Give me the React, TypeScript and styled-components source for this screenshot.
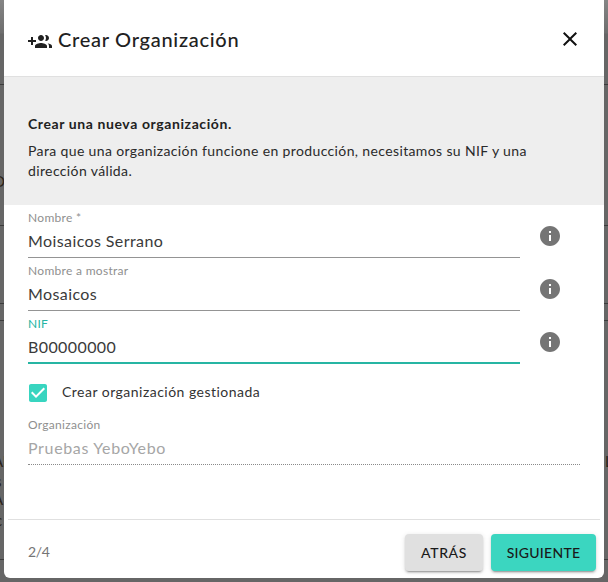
import React from "react";
import styled, { createGlobalStyle } from "styled-components";

const Global = createGlobalStyle`
  html, body { margin: 0; padding: 0; height: 100%; }
  body { font-family: "Lato", "Noto Sans", sans-serif; background: #666; overflow: hidden; }
  * { box-sizing: border-box; }
`;

const Screen = styled.div`
  width: 608px;
  height: 582px;
  padding: 0 4px 4px;
  background: linear-gradient(#858585 0, #6e6e6e 33px, #666 34px);
  position: relative;
  overflow: hidden;
`;

const BackLine = styled.div<{ $top: number }>`
  position: absolute;
  top: ${(p) => p.$top}px;
  left: 0;
  right: 0;
  height: 1px;
  background: #3c3c3c;
`;

const BackGlyph = styled.span<{ $top: number; $x: number }>`
  position: absolute;
  top: ${(p) => p.$top}px;
  left: ${(p) => p.$x}px;
  font-size: 15px;
  line-height: 16px;
  color: #2b2218;
`;

const Dialog = styled.div`
  position: relative;
  width: 600px;
  height: 578px;
  background: #fff;
  border-radius: 0 0 6px 6px;
  display: flex;
  flex-direction: column;
  color: #212121;
`;

const Header = styled.header`
  height: 77px;
  border-bottom: 1px solid #e0e0e0;
  padding: 0 22px 0 24px;
  display: flex;
  align-items: center;
  justify-content: space-between;
`;

const TitleGroup = styled.div`
  display: flex;
  align-items: center;
  gap: 6px;
  padding-top: 4px;
`;

const TitleIcon = styled.span`
  display: block;
  padding-top: 4px;
`;

const Title = styled.h2`
  margin: -2px 0 0;
  font-size: 20px;
  line-height: 24px;
  font-weight: 500;
  letter-spacing: 0.72px;
  color: #212121;
`;

const CloseButton = styled.button`
  border: 0;
  background: none;
  padding: 0;
  width: 24px;
  height: 24px;
  display: flex;
  color: #111;
  margin-top: 2px;
`;

const Notice = styled.section`
  height: 128px;
  background: #eee;
  padding: 37px 24px 0;
`;

const NoticeTitle = styled.p`
  margin: 0 0 7px;
  font-size: 14px;
  line-height: 20px;
  font-weight: 700;
  letter-spacing: 0.6px;
`;

const NoticeText = styled.p`
  margin: 0;
  font-size: 14px;
  line-height: 20px;
  letter-spacing: 0.37px;
  color: #2a2a2a;
`;

const Form = styled.div`
  flex: 1;
  padding: 6px 24px 0;
  display: flex;
  flex-direction: column;
`;

const FieldRow = styled.div`
  display: flex;
  height: 53px;
`;

const Field = styled.div<{ $focused?: boolean; $disabled?: boolean }>`
  width: ${(p) => (p.$disabled ? "552px" : "492px")};
  height: 47px;
  display: flex;
  flex-direction: column;
  border-bottom: ${(p) =>
    p.$disabled
      ? "1px dotted #8a8a8a"
      : p.$focused
        ? "2px solid #26b5a3"
        : "1px solid #949494"};
`;

const FieldLabel = styled.label<{ $focused?: boolean }>`
  font-size: 12px;
  line-height: 14px;
  letter-spacing: 0.3px;
  color: ${(p) => (p.$focused ? "#26b5a3" : "#8f8f8f")};
`;

const FieldValue = styled.div<{ $disabled?: boolean }>`
  margin-top: 6px;
  font-size: 16px;
  line-height: 20px;
  letter-spacing: ${(p) => (p.$disabled ? "0.65px" : "0.4px")};
  color: ${(p) => (p.$disabled ? "#a6a6a6" : "#3a3a3a")};
`;

const InfoSlot = styled.div`
  width: 60px;
  height: 47px;
  display: flex;
  align-items: center;
  justify-content: center;
  margin-top: 1px;
  color: #757575;
`;

const CheckRow = styled.div`
  display: flex;
  align-items: center;
  height: 24px;
  margin: 11px 0 0 -2px;
  color: #38d5c0;
`;

const CheckLabel = styled.span`
  margin: 0 0 4px 12px;
  font-size: 14px;
  letter-spacing: 0.48px;
  color: #333;
`;

const OrgField = styled.div`
  margin-top: 13px;
`;

const Footer = styled.footer`
  margin: 0 4px;
  height: 59px;
  border-top: 1px solid #e0e0e0;
  padding: 14px 4px 0 20px;
  display: flex;
  align-items: flex-start;
  justify-content: space-between;
`;

const Step = styled.span`
  margin-top: 8px;
  font-size: 14px;
  line-height: 20px;
  letter-spacing: -0.4px;
  color: #757575;
`;

const Actions = styled.div`
  display: flex;
  gap: 8px;
`;

const Button = styled.button<{ $primary?: boolean }>`
  height: 37px;
  width: ${(p) => (p.$primary ? "105px" : "78px")};
  border: 0;
  border-radius: 4px;
  padding: 0;
  font-family: inherit;
  font-size: 14px;
  font-weight: 500;
  letter-spacing: ${(p) => (p.$primary ? "0.25px" : "0.6px")};
  color: #1a1a1a;
  background: ${(p) => (p.$primary ? "#3bd6c0" : "#e0e0e0")};
  box-shadow: 0 3px 1px -2px rgba(0, 0, 0, 0.2), 0 2px 2px 0 rgba(0, 0, 0, 0.14), 0 1px 5px 0 rgba(0, 0, 0, 0.12);
`;

const Icon = ({ d, size = 24 }: { d: string; size?: number }) => (
  <svg width={size} height={size} viewBox="0 0 24 24" fill="currentColor" style={{ display: "block", flex: "none" }}>
    <path d={d} />
  </svg>
);

const GROUP_ADD =
  "M8 10H5V7H3v3H0v2h3v3h2v-3h3v-2zm10 1c1.66 0 2.99-1.34 2.99-3S19.66 5 18 5c-.32 0-.63.05-.91.14.57.81.9 1.79.9 2.86s-.34 2.04-.9 2.86c.28.09.59.14.91.14zm-5 0c1.66 0 2.99-1.34 2.99-3S14.66 5 13 5s-3 1.34-3 3 1.34 3 3 3zm6.62 2.16c.83.73 1.38 1.66 1.38 2.84v2h3v-2c0-1.54-2.37-2.49-4.38-2.84zM13 13c-2 0-6 1-6 3v2h12v-2c0-2-4-3-6-3z";
const CLOSE =
  "M19 6.41 17.59 5 12 10.59 6.41 5 5 6.41 10.59 12 5 17.59 6.41 19 12 13.41 17.59 19 19 17.59 13.41 12z";
const INFO =
  "M12 2C6.48 2 2 6.48 2 12s4.48 10 10 10 10-4.48 10-10S17.52 2 12 2zm1 15h-2v-6h2v6zm0-8h-2V7h2v2z";
const CHECK =
  "M19 3H5c-1.11 0-2 .9-2 2v14c0 1.1.89 2 2 2h14c1.11 0 2-.9 2-2V5c0-1.1-.89-2-2-2zm-9 14l-5-5 1.41-1.41L10 14.17l7.59-7.59L19 8l-9 9z";

const fields = [
  { label: "Nombre *", value: "Moisaicos Serrano" },
  { label: "Nombre a mostrar", value: "Mosaicos" },
  { label: "NIF", value: "B00000000", focused: true },
];

const lines = [84, 225, 303, 320, 559];
const glyphs = [
  { top: 173, x: -7, text: "O" },
  { top: 453, x: -7, text: "Al" },
  { top: 473, x: -5, text: "s" },
  { top: 491, x: -7, text: "A" },
  { top: 512, x: -5, text: "c" },
  { top: 453, x: 605, text: "L" },
];

export default function App() {
  return (
    <>
      <Global />
      <Screen>
        {lines.map((t) => (
          <BackLine key={t} $top={t} />
        ))}
        {glyphs.map((g) => (
          <BackGlyph key={`${g.top}-${g.x}`} $top={g.top} $x={g.x}>
            {g.text}
          </BackGlyph>
        ))}
        <Dialog>
          <Header>
            <TitleGroup>
              <TitleIcon>
                <Icon d={GROUP_ADD} />
              </TitleIcon>
              <Title>Crear Organización</Title>
            </TitleGroup>
            <CloseButton aria-label="Cerrar">
              <Icon d={CLOSE} />
            </CloseButton>
          </Header>
          <Notice>
            <NoticeTitle>Crear una nueva organización.</NoticeTitle>
            <NoticeText>
              Para que una organización funcione en producción, necesitamos su NIF y una
              <br />
              dirección válida.
            </NoticeText>
          </Notice>
          <Form>
            {fields.map((f) => (
              <FieldRow key={f.label}>
                <Field $focused={f.focused}>
                  <FieldLabel $focused={f.focused}>{f.label}</FieldLabel>
                  <FieldValue>{f.value}</FieldValue>
                </Field>
                <InfoSlot>
                  <Icon d={INFO} />
                </InfoSlot>
              </FieldRow>
            ))}
            <CheckRow>
              <Icon d={CHECK} />
              <CheckLabel>Crear organización gestionada</CheckLabel>
            </CheckRow>
            <OrgField>
              <Field $disabled>
                <FieldLabel>Organización</FieldLabel>
                <FieldValue $disabled>Pruebas YeboYebo</FieldValue>
              </Field>
            </OrgField>
          </Form>
          <Footer>
            <Step>2/4</Step>
            <Actions>
              <Button>ATRÁS</Button>
              <Button $primary>SIGUIENTE</Button>
            </Actions>
          </Footer>
        </Dialog>
      </Screen>
    </>
  );
}
